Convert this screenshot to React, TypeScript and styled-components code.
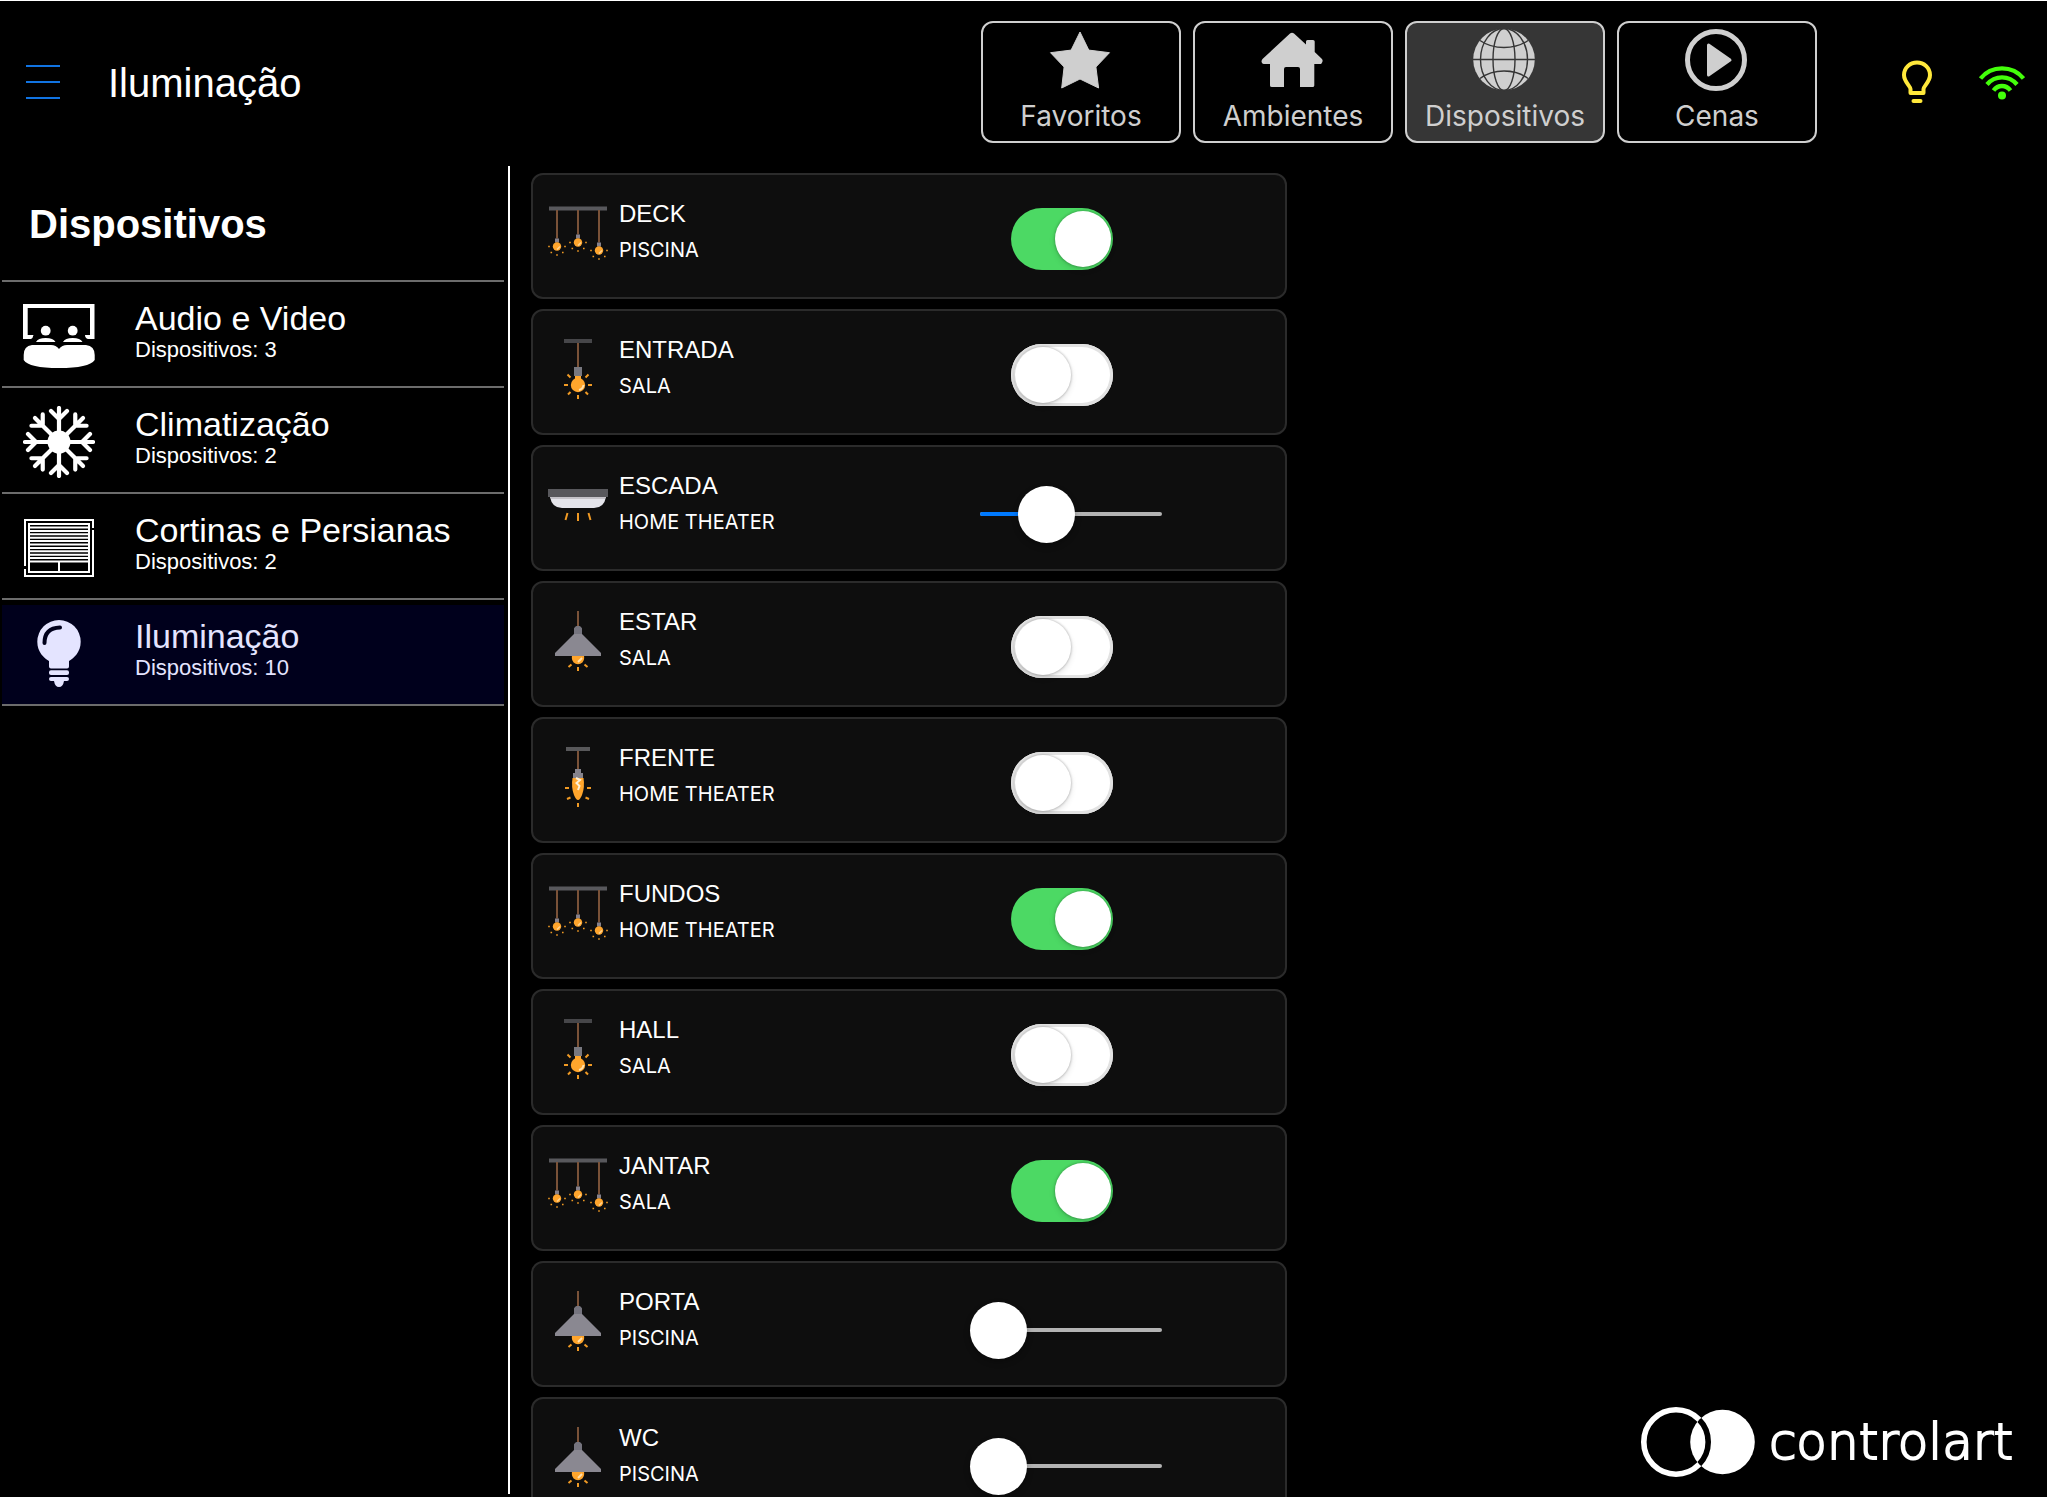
import React, { useState } from "react";
import styled, { createGlobalStyle } from "styled-components";

const sans = '"Liberation Sans", Arial, Helvetica, sans-serif';
const ui = 'Inter, "Liberation Sans", sans-serif';

const GlobalStyle = createGlobalStyle`
  *, *::before, *::after { box-sizing: border-box; }
  body { margin: 0; background: #000; color: #fff; font-family: ${sans}; }
  button { font: inherit; color: inherit; background: none; border: 0; padding: 0; cursor: pointer; }
`;

/* ---------- layout ---------- */

const Shell = styled.div`
  display: flex;
  flex-direction: column;
  height: 100vh;
  overflow: hidden;
  background: #000;
`;

const Header = styled.header`
  display: flex;
  align-items: center;
  flex: none;
  border-top: 1px solid #fff;
  padding: 20px 22px 23px 26px;
`;

const MenuButton = styled.button`
  display: flex;
  flex-direction: column;
  gap: 14px;
  width: 34px;
`;

const MenuBar = styled.span`
  height: 2px;
  background: #1174e2;
`;

const PageTitle = styled.h1`
  flex: 1;
  margin: 0 0 0 48px;
  padding-top: 2px;
  font-size: 40px;
  line-height: 48px;
  font-weight: 400;
`;

const Nav = styled.nav`
  display: flex;
  gap: 12px;
`;

const NavButton = styled.button<{ $active: boolean }>`
  display: flex;
  flex-direction: column;
  align-items: center;
  gap: 8px;
  width: 200px;
  height: 122px;
  padding-top: 5px;
  border: 2px solid #cfcfcf;
  border-radius: 12px;
  color: #cfcfcf;
  background: ${(p) => (p.$active ? "#363636" : "#000")};
  font-family: ${ui};
  font-size: 28px;
  line-height: 32px;
`;

const Status = styled.div`
  display: flex;
  gap: 36px;
  margin-left: 76px;
`;

const Body = styled.div`
  display: flex;
  flex: 1;
  min-height: 0;
`;

const Sidebar = styled.aside`
  flex: none;
  width: 510px;
  margin-bottom: 3px;
  padding: 0 4px 0 2px;
  border-right: 2px solid #fff;
`;

const SidebarTitle = styled.h2`
  margin: 0;
  padding: 34px 0 32px 27px;
  font-size: 40px;
  line-height: 48px;
  font-weight: 700;
`;

const Categories = styled.ul`
  list-style: none;
  margin: 0;
  padding: 0;
  border-top: 2px solid #6c6c6c;
`;

const Category = styled.li`
  border-bottom: 2px solid #6c6c6c;
`;

const CategoryButton = styled.button<{ $active: boolean }>`
  display: flex;
  align-items: center;
  gap: 40px;
  width: 100%;
  height: 104px;
  padding: 4px 0 0 21px;
  text-align: left;
  color: ${(p) => (p.$active ? "#e4e4ff" : "#fff")};
  background: ${(p) => (p.$active ? "linear-gradient(#000 5px, #00001c 5px)" : "none")};
`;

const CategoryText = styled.span`
  display: flex;
  flex-direction: column;
  padding-bottom: 10px;
`;

const CategoryName = styled.span`
  font-size: 34px;
  line-height: 38px;
`;

const CategoryCount = styled.span`
  font-size: 22px;
  line-height: 26px;
`;

const DeviceList = styled.main`
  flex: 0 1 777px;
  display: flex;
  flex-direction: column;
  gap: 10px;
  padding: 7px 0 0 21px;
  overflow-y: auto;
  scrollbar-width: none;
`;

const Card = styled.section`
  display: flex;
  align-items: flex-start;
  flex: none;
  height: 126px;
  padding-left: 15px;
  border: 2px solid #2b2b2b;
  border-radius: 12px;
  background: #0e0e0e;
`;

const CardIcon = styled.span`
  flex: none;
  width: 60px;
  height: 60px;
  margin: 28px 11px 0 0;
`;

const CardText = styled.label`
  flex: 1;
  display: flex;
  flex-direction: column;
  gap: 10px;
  padding-top: 25px;
`;

const DeviceName = styled.span`
  font-size: 24px;
  line-height: 28px;
`;

const RoomName = styled.span`
  font-family: ${ui};
  font-size: 20px;
  line-height: 24px;
`;

const ControlArea = styled.div<{ $slider: boolean }>`
  flex: none;
  width: 315px;
  padding: ${(p) => (p.$slider ? "38px 0 0 0" : "33px 0 0 41px")};
`;

const Switch = styled.input<{ checked: boolean }>`
  appearance: none;
  display: flex;
  align-items: center;
  justify-content: ${(p) => (p.checked ? "flex-end" : "flex-start")};
  width: 102px;
  height: 62px;
  margin: 0;
  padding: 0 2px 0 4px;
  border-radius: 31px;
  background: ${(p) => (p.checked ? "#4cd964" : "#fff")};
  box-shadow: ${(p) => (p.checked ? "none" : "inset 0 0 0 3px #e2e2e2")};
  cursor: pointer;

  &::before {
    content: "";
    width: 56px;
    height: 56px;
    border-radius: 50%;
    background: #fff;
    box-shadow: 0 0 2px 1px rgba(0, 0, 0, 0.16), 0 3px 6px rgba(0, 0, 0, 0.12);
  }
`;

const SliderBox = styled.div`
  display: grid;
  align-items: center;
  width: 202px;
`;

const SliderTrack = styled.span`
  grid-area: 1 / 1;
  height: 4px;
  margin: 0 10px;
  border-radius: 2px;
  overflow: hidden;
  background: #b3b3b3;
`;

const SliderFill = styled.span`
  display: block;
  height: 100%;
  background: #007aff;
`;

const SliderInput = styled.input`
  grid-area: 1 / 1;
  appearance: none;
  width: 100%;
  height: 58px;
  margin: 0;
  background: transparent;
  cursor: pointer;

  &::-webkit-slider-thumb {
    appearance: none;
    width: 57px;
    height: 57px;
    border-radius: 50%;
    background: #fff;
    box-shadow: 0 3px 6px rgba(0, 0, 0, 0.3);
  }
`;

const BrandArea = styled.footer`
  flex: 1;
  display: flex;
  justify-content: flex-end;
  align-items: flex-end;
  padding: 0 34px 19px 0;
`;

const Brand = styled.div`
  display: flex;
  align-items: center;
  gap: 13px;
`;

const BrandName = styled.span`
  font-family: "DejaVu Sans", sans-serif;
  font-weight: 200;
  font-size: 50px;
  line-height: 60px;
  -webkit-text-stroke: 2px #fff;
  stroke-linejoin: round;
`;

/* ---------- header icons ---------- */

const StarIcon = () => (
  <svg width="64" height="64" fill="currentColor" stroke="currentColor" strokeLinejoin="round" aria-hidden="true">
    <path d="M31 4 39.8 22.1 60.5 24.7 46.9 39 49.6 60 31 51 12.7 60 15.1 39 1.5 24.7 22.1 22.1Z" />
  </svg>
);

const HomeIcon = () => (
  <svg width="64" height="64" fill="currentColor" aria-hidden="true">
    <path d="M29 5.5Q31 4 33 5.5L45 16.500V13.500Q45 12 46.500 12H52Q53.700 12 53.700 13.500V24L61 31Q62.500 33 60.500 35.500Q60 36 59 36H53.300V57.500Q53.300 59 51.500 59H39V41Q39 39 37 39H25Q23 39 23 41V59H11Q9 59 9 57.500V36H3Q1.500 36 .8 34.500Q0 33 1.500 31Z" />
  </svg>
);

const GlobeIcon = () => (
  <svg width="64" height="64" aria-hidden="true">
    <circle cx="31" cy="31.500" r="30.800" fill="currentColor" />
    <g fill="none" stroke="#363636" strokeWidth="1.400">
      <ellipse cx="31" cy="31.500" rx="11" ry="31" />
      <ellipse cx="31" cy="31.500" rx="23.500" ry="31" />
      <path d="M0 31.500H62M7 12.500Q17 19.500 31 19.500T55 12.500M7 50.500Q17 43 31 43T55 50.500" />
    </g>
  </svg>
);

const PlayIcon = () => (
  <svg width="64" height="64" aria-hidden="true">
    <circle cx="31" cy="32" r="28.500" fill="none" stroke="currentColor" strokeWidth="5" />
    <path d="M23.500 17V47L45 32Z" fill="currentColor" stroke="currentColor" strokeWidth="3" strokeLinejoin="round" />
  </svg>
);

const LampStatusIcon = () => (
  <svg width="48" height="48" fill="none" stroke="#ffe83b" strokeWidth="4" role="img" aria-label="Luzes">
    <path d="M17.500 35V31C17.500 28 11 24 11 17A13 12.500 0 0 1 37 17C37 24 30.500 28 30.500 31V35Z" strokeLinejoin="round" />
    <path d="M20.500 43H27.500" strokeLinecap="round" />
  </svg>
);

const WifiIcon = () => (
  <svg width="48" height="48" fill="none" stroke="#43ff0a" strokeWidth="4.300" role="img" aria-label="Wi-Fi">
    <path d="M3.500 20.500C14.500 7 35.500 7 46.500 20.500M10 26.500C18 17 32 17 40 26.500M16.500 32.500C21 26.500 29 26.500 33.500 32.500" />
    <circle cx="25" cy="37.500" r="4" fill="#43ff0a" stroke="none" />
  </svg>
);

/* ---------- category icons ---------- */

const TheaterIcon = () => (
  <svg width="72" height="72" fill="currentColor" aria-hidden="true">
    <path d="M0 4H71.500V39H65Q62 38 62 35H67V8H4.700V35H10.500Q10 38 8 39H0Z" />
    <circle cx="22.700" cy="30.700" r="4.900" />
    <circle cx="49.700" cy="30.700" r="4.900" />
    <path d="M13 42Q15 38 22.700 38T32.500 42ZM40 42Q42 38 49.700 38T59.500 42Z" />
    <path d="M9 45H28Q33 45 36 49Q39 45 44 45H63Q71.700 46 71.700 55V60Q66 68 36 68T.7 60V55Q.7 46 9 45Z" />
  </svg>
);

const SnowIcon = () => (
  <svg width="72" height="72" fill="none" stroke="currentColor" strokeWidth="4.200" strokeLinecap="round" aria-hidden="true">
    <circle cx="36" cy="36" r="11.500" fill="currentColor" stroke="none" />
    {[0, 45, 90, 135, 180, 225, 270, 315].map((a) => (
      <path key={a} d="M36 30V2M28 5L36 13L44 5" transform={`rotate(${a} 36 36)`} />
    ))}
  </svg>
);

const BlindsIcon = () => (
  <svg width="72" height="72" fill="none" stroke="currentColor" strokeWidth="2" aria-hidden="true">
    <path d="M70 16V8H2V54M70 18V64H2V57" />
    <path d="M6 12H66V60H6ZM36 50V60" />
    {Array.from({ length: 11 }, (_, i) => (
      <path key={i} d={`M7 ${15.5 + i * 3.4}H65`} />
    ))}
  </svg>
);

const BulbIcon = () => (
  <svg width="72" height="72" fill="currentColor" aria-hidden="true">
    <path d="M36 2A21.700 21.700 0 0 1 57.700 23.700C57.700 34 51 40 46 43V48.500Q46 50.500 44 50.500H28Q26 50.500 26 48.500V43C21 40 14.300 34 14.300 23.700A21.700 21.700 0 0 1 36 2Z" />
    <rect x="26" y="52.300" width="20" height="4.700" rx="2" />
    <path d="M28 59H44Q46 59 46 61T44 63H41Q40 69 36 69T31 63H28Q26 63 26 61T28 59Z" />
    <path d="M21.500 25Q21.500 10 37 9.500" fill="none" stroke="#00001c" strokeWidth="4" strokeLinecap="round" />
  </svg>
);

/* ---------- lamp icons ---------- */

const orange = "#ffa52c";
const ray = "#f09a24";
const cord = "#7a5238";

const TrackLamp = () => (
  <svg width="60" height="60" aria-hidden="true">
    <rect x="1" y="3.500" width="58" height="4" fill="#58585c" />
    {[[9, 43.5], [30, 39.5], [51, 47.5]].map(([x, y]) => (
      <g key={x}>
        <path d={`M${x} 7V${y - 8}`} stroke={cord} strokeWidth="2" />
        <rect x={x - 2} y={y - 8} width="4" height="4" fill="#85818c" />
        <circle cx={x} cy={y} r="4.200" fill={orange} />
        <path d={`M${x} ${y + 3}L${x + 3} ${y}`} stroke="#ffd493" strokeWidth="1.500" />
        <path
          d={`M${x - 8.8} ${y}h1.600M${x + 7.2} ${y}h1.600M${x - 6.5} ${y + 6}h1.600M${x + 5} ${y + 6}h1.600M${x - 0.8} ${y + 8.5}h1.600`}
          stroke={ray}
          strokeWidth="1.600"
        />
      </g>
    ))}
  </svg>
);

const PendantLamp = () => (
  <svg width="60" height="60" aria-hidden="true">
    <rect x="16" width="28" height="4" fill="#464649" />
    <path d="M30 4V28" stroke={cord} strokeWidth="2" />
    <rect x="26" y="28" width="8" height="9" fill="#77777f" />
    <circle cx="30" cy="46" r="7.200" fill={orange} />
    <rect x="27" y="37" width="6" height="4" fill={orange} />
    <path d="M31 51Q35 50 35.500 46" fill="none" stroke="#ffe0ae" strokeWidth="2" />
    <path d="M16 46H20M40 46H44M30 56V60M19.500 35.500L22.500 38.500M40.500 35.500L37.500 38.500M20 55.500L22.500 53M40 55.500L37.500 53" stroke={ray} strokeWidth="2" />
  </svg>
);

const CeilingLamp = () => (
  <svg width="60" height="60" aria-hidden="true">
    <path d="M2 22H58Q56 33 46 33H14Q4 33 2 22Z" fill="#e4e4ea" />
    <rect x="3" y="22" width="54" height="2" fill="#c4c2c8" />
    <rect y="14" width="60" height="8" fill="#58585c" />
    <path d="M19.500 38L17.500 45M30 38V46M40.500 38L42.500 45" stroke={ray} strokeWidth="2" />
  </svg>
);

const ShadeLamp = () => (
  <svg width="60" height="60" aria-hidden="true">
    <path d="M30 0V16" stroke={cord} strokeWidth="2" />
    <circle cx="30" cy="47" r="6.200" fill={orange} />
    <path d="M30 51L34 47" stroke="#ffe0ae" strokeWidth="2" />
    <path d="M26 18Q27 15 30 15T34 18V23L53 42V45H7V42L26 23Z" fill="#8a8891" />
    <path d="M26 18Q27 15 30 15T34 18V23H26Z" fill="#75747e" />
    <path d="M30 56V60M20.500 56L23.500 53.500M39.500 56L36.500 53.500" stroke={ray} strokeWidth="2" />
  </svg>
);

const FilamentLamp = () => (
  <svg width="60" height="60" aria-hidden="true">
    <rect x="18" width="24" height="4" fill="#58585a" />
    <path d="M30 4V22" stroke={cord} strokeWidth="2" />
    <path d="M24.500 31Q23 40 26 48Q28 53 30 53T34 48Q37 40 35.500 31Z" fill={orange} />
    <path d="M27 22H33V26H35V31H25V26H27Z" fill="#85838c" />
    <path d="M28 31L32 33L28.500 36L31.500 39L30 43" fill="none" stroke="#fff1d6" strokeWidth="2" />
    <path d="M17 41H21M39 41H43M30 56V60M19 52L22.500 50.500M41 52L37.500 50.500" stroke={ray} strokeWidth="2" />
  </svg>
);

const BrandMark = () => (
  <svg width="116" height="72" aria-hidden="true">
    <defs>
      <clipPath id="disc"><circle cx="82.500" cy="36" r="32.300" /></clipPath>
    </defs>
    <circle cx="36" cy="36" r="32.200" fill="none" stroke="#fff" strokeWidth="5.600" />
    <circle cx="82.500" cy="36" r="32.300" fill="#fff" />
    <circle cx="36" cy="36" r="32.200" fill="none" stroke="#000" strokeWidth="5.600" clipPath="url(#disc)" />
  </svg>
);

/* ---------- data ---------- */

const tabs = [
  { name: "Favoritos", Icon: StarIcon },
  { name: "Ambientes", Icon: HomeIcon },
  { name: "Dispositivos", Icon: GlobeIcon },
  { name: "Cenas", Icon: PlayIcon },
];

const categories = [
  { name: "Audio e Video", count: 3, Icon: TheaterIcon },
  { name: "Climatização", count: 2, Icon: SnowIcon },
  { name: "Cortinas e Persianas", count: 2, Icon: BlindsIcon },
  { name: "Iluminação", count: 10, Icon: BulbIcon },
];

type Device = { name: string; room: string; Icon: () => React.ReactElement; on?: boolean; level?: number };

const devices: Device[] = [
  { name: "DECK", room: "PISCINA", Icon: TrackLamp, on: true },
  { name: "ENTRADA", room: "SALA", Icon: PendantLamp, on: false },
  { name: "ESCADA", room: "HOME THEATER", Icon: CeilingLamp, level: 33 },
  { name: "ESTAR", room: "SALA", Icon: ShadeLamp, on: false },
  { name: "FRENTE", room: "HOME THEATER", Icon: FilamentLamp, on: false },
  { name: "FUNDOS", room: "HOME THEATER", Icon: TrackLamp, on: true },
  { name: "HALL", room: "SALA", Icon: PendantLamp, on: false },
  { name: "JANTAR", room: "SALA", Icon: TrackLamp, on: true },
  { name: "PORTA", room: "PISCINA", Icon: ShadeLamp, level: 0 },
  { name: "WC", room: "PISCINA", Icon: ShadeLamp, level: 0 },
];

function DeviceCard({ device }: { device: Device }) {
  const [on, setOn] = useState(device.on ?? false);
  const [level, setLevel] = useState(device.level ?? 0);
  const slider = device.level !== undefined;
  const id = `device-${device.name.toLowerCase()}`;
  return (
    <Card>
      <CardIcon><device.Icon /></CardIcon>
      <CardText htmlFor={id}>
        <DeviceName>{device.name}</DeviceName>
        <RoomName>{device.room}</RoomName>
      </CardText>
      <ControlArea $slider={slider}>
        {slider ? (
          <SliderBox>
            <SliderTrack><SliderFill style={{ width: `${level}%` }} /></SliderTrack>
            <SliderInput id={id} type="range" min={0} max={100} value={level} onChange={(e) => setLevel(Number(e.target.value))} />
          </SliderBox>
        ) : (
          <Switch id={id} type="checkbox" checked={on} onChange={(e) => setOn(e.target.checked)} />
        )}
      </ControlArea>
    </Card>
  );
}

export default function App() {
  const [tab, setTab] = useState("Dispositivos");
  const [category, setCategory] = useState("Iluminação");
  return (
    <Shell>
      <GlobalStyle />
      <Header>
        <MenuButton aria-label="Menu"><MenuBar /><MenuBar /><MenuBar /></MenuButton>
        <PageTitle>{category}</PageTitle>
        <Nav>
          {tabs.map(({ name, Icon }) => (
            <NavButton key={name} $active={tab === name} onClick={() => setTab(name)}>
              <Icon />
              {name}
            </NavButton>
          ))}
        </Nav>
        <Status><LampStatusIcon /><WifiIcon /></Status>
      </Header>
      <Body>
        <Sidebar>
          <SidebarTitle>Dispositivos</SidebarTitle>
          <Categories>
            {categories.map(({ name, count, Icon }) => (
              <Category key={name}>
                <CategoryButton $active={category === name} onClick={() => setCategory(name)}>
                  <Icon />
                  <CategoryText>
                    <CategoryName>{name}</CategoryName>
                    <CategoryCount>Dispositivos: {count}</CategoryCount>
                  </CategoryText>
                </CategoryButton>
              </Category>
            ))}
          </Categories>
        </Sidebar>
        <DeviceList>
          {devices.map((d) => <DeviceCard key={d.name} device={d} />)}
        </DeviceList>
        <BrandArea>
          <Brand><BrandMark /><BrandName>controlart</BrandName></Brand>
        </BrandArea>
      </Body>
    </Shell>
  );
}
